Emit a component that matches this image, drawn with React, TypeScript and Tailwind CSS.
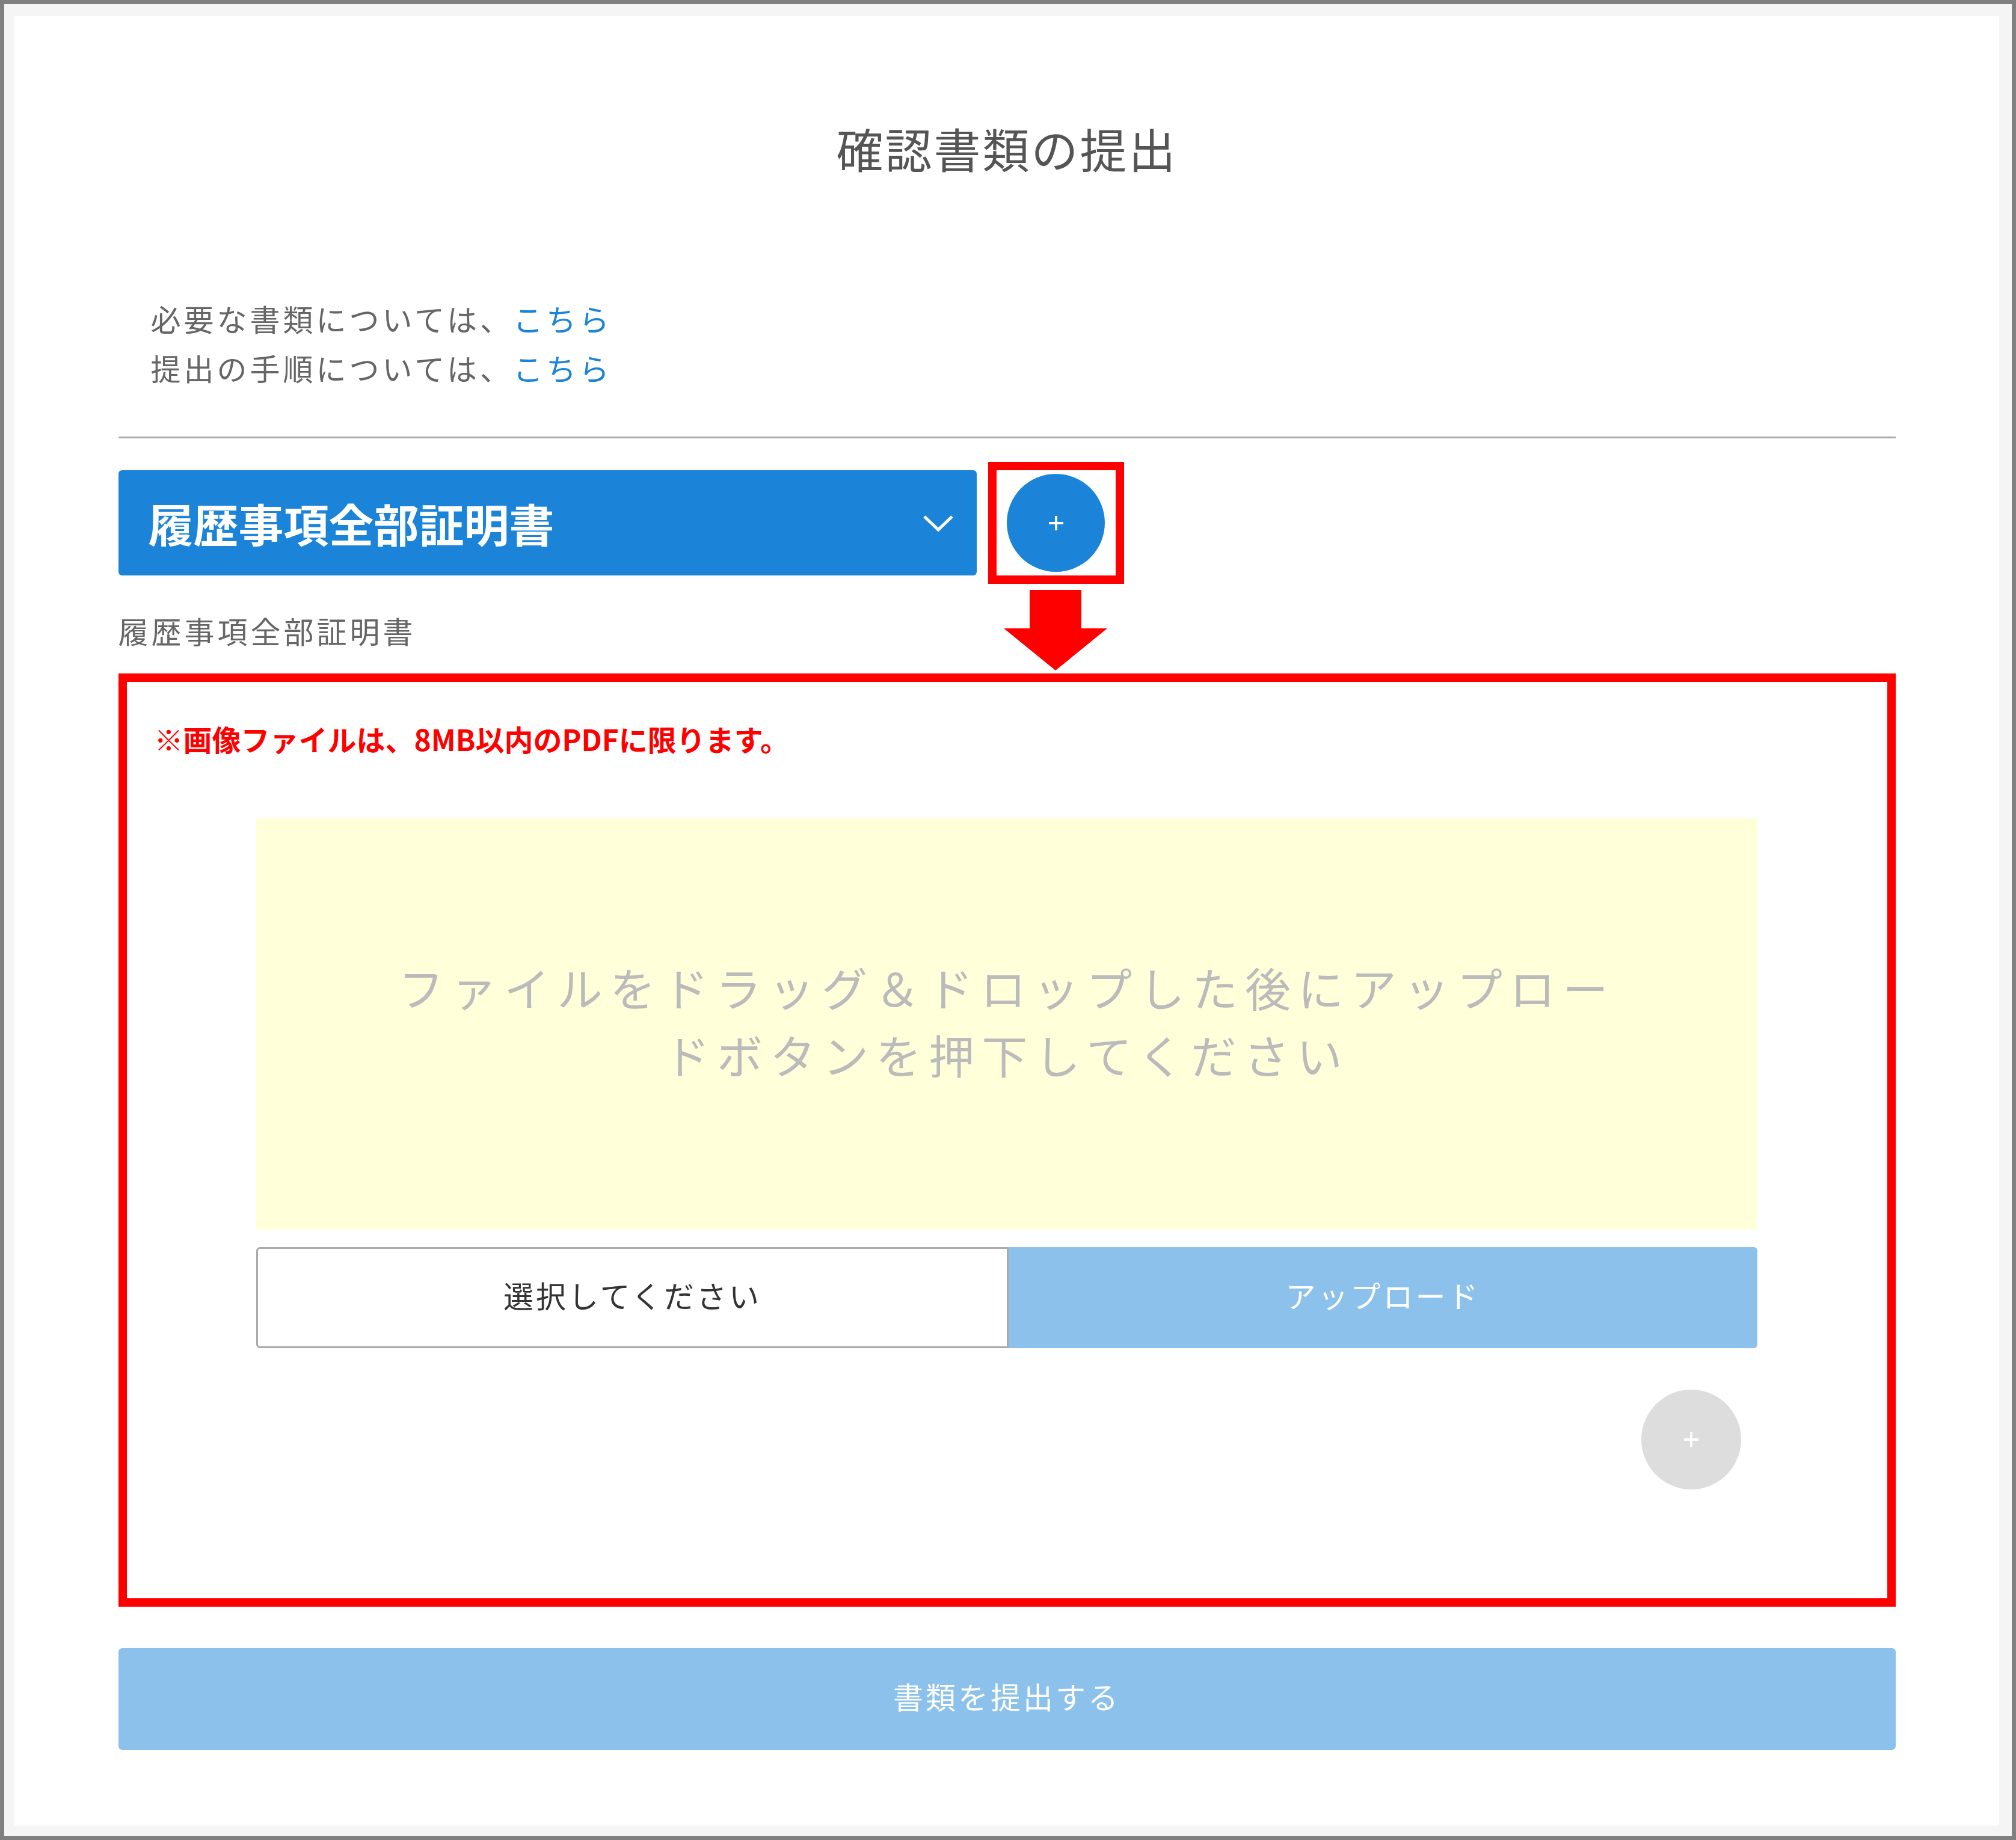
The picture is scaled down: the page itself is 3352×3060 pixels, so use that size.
import React from 'react';

// Document submission form (確認書類の提出) with annotation boxes
function Plus({ className }: { className?: string }) {
  return (
    <svg className={className} width="28" height="28" viewBox="0 0 28 28" fill="none">
      <path d="M14 2v24M2 14h24" stroke="white" strokeWidth="4" />
    </svg>
  );
}

function Chevron() {
  return (
    <svg width="52" height="28" viewBox="0 0 52 28" fill="none">
      <polyline points="3,3 26,25 49,3" stroke="white" strokeWidth="5" fill="none" />
    </svg>
  );
}

function DownArrow() {
  return (
    <svg width="172" height="134" viewBox="0 0 172 134">
      <rect x="43" y="0" width="86" height="66" fill="#ff0000" />
      <polygon points="0,64 172,64 86,134" fill="#ff0000" />
    </svg>
  );
}

export default function App() {
  return (
    <div className="w-[3352px] h-[3060px] border-[7px] border-[#808080] bg-[#f5f5f5] pl-[17px] pr-[21px] pt-[20px] pb-[17px] font-['Noto_Sans_CJK_JP',sans-serif]">
      <div className="w-full h-full bg-white">
        <div className="relative mx-auto w-[2955px] pt-[179px]">
          {/* Title */}
          <h1 className="text-center text-[78px] leading-[80px] tracking-[3px] text-[#555555] font-normal">
            確認書類の提出
          </h1>

          {/* Links */}
          <div className="mt-[202px] pl-[54px] text-[50px] leading-[82px] tracking-[5px] text-[#666666]">
            <p>
              必要な書類については、<span className="text-[#1b84d9]">こちら</span>
            </p>
            <p>
              提出の手順については、<span className="text-[#1b84d9]">こちら</span>
            </p>
          </div>

          <div className="mt-[74px] border-t-[3px] border-[#aaaaaa]" />

          {/* Select row */}
          <div className="mt-[39px] flex items-center">
            <div className="w-[1427px] h-[175px] rounded-[6px] bg-[#1b84d9] flex items-center justify-between pl-[50px] pr-[38px]">
              <span className="text-white font-bold text-[75px] leading-none">履歴事項全部証明書</span>
              <Chevron />
            </div>
            <div className="ml-[19px] w-[226px] h-[203px] border-[14px] border-[#ff0000] flex items-center justify-center">
              <div className="w-[163px] h-[163px] rounded-full bg-[#1b84d9] flex items-center justify-center">
                <Plus />
              </div>
            </div>
          </div>

          {/* Selected document label */}
          <p className="mt-[36px] text-[50px] leading-[82px] tracking-[5px] text-[#666666]">
            履歴事項全部証明書
          </p>

          {/* Upload panel (annotated) */}
          <div className="mt-[31px] h-[1552px] border-[14px] border-[#ff0000] pt-[60px]">
            <p className="pl-[46px] text-[48px] leading-[69px] font-bold text-[#ff0000]">
              ※画像ファイルは、8MB以内のPDFに限ります。
            </p>

            <div className="mx-auto w-[2496px]">
              <div className="mt-[97px] h-[685px] bg-[#ffffda] flex flex-col items-center justify-center pb-[12px] text-[76px] leading-[112px] tracking-[12px] text-[#bbbbbb]">
                <span>ファイルをドラッグ＆ドロップした後にアップロー</span>
                <span>ドボタンを押下してください</span>
              </div>

              <div className="mt-[29px] flex h-[168px]">
                <div className="flex-1 rounded-l-[6px] border-[3px] border-[#aaaaaa] bg-white flex items-center justify-center pb-[10px] text-[50px] tracking-[4px] text-[#333333]">
                  選択してください
                </div>
                <div className="flex-1 rounded-r-[6px] bg-[#8cc1eb] flex items-center justify-center pb-[10px] text-[50px] tracking-[4px] text-white">
                  アップロード
                </div>
              </div>

              <div className="mt-[69px] flex justify-end pr-[27px]">
                <div className="w-[166px] h-[166px] rounded-full bg-[#dddddd] flex items-center justify-center">
                  <Plus />
                </div>
              </div>
            </div>
          </div>

          {/* Submit */}
          <div className="mt-[69px] h-[169px] rounded-[6px] bg-[#8cc1eb] flex items-center justify-center pb-[10px] text-[50px] tracking-[4px] text-white">
            書類を提出する
          </div>

          {/* Annotation arrow */}
          <div className="absolute left-[1472px] top-[954px]">
            <DownArrow />
          </div>
        </div>
      </div>
    </div>
  );
}
